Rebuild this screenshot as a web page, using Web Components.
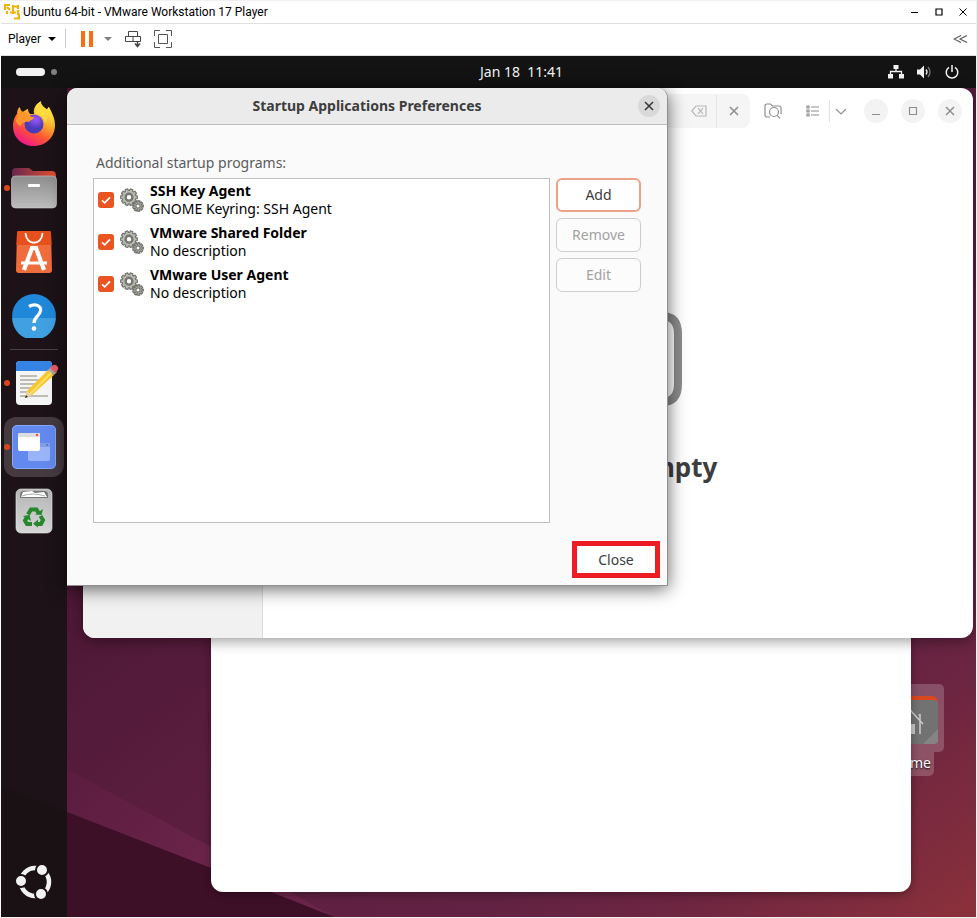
<!DOCTYPE html>
<html lang="en">
<head>
<meta charset="utf-8">
<title>Ubuntu 64-bit - VMware Workstation 17 Player</title>
<style>
html{height:100%}
body{margin:0;min-height:100%;display:flex;background:#f0f0f0;font-family:"Noto Sans",sans-serif;font-size:14px;color:#3d3d3d}
player-window{flex:1}
</style>
</head>
<body>
<player-window></player-window>
<script>
const BASE = `*{box-sizing:border-box}button{font:inherit;color:inherit;background:none;border:0;padding:0;margin:0;cursor:pointer}svg{display:block}`;
function define(name, css, html) {
  customElements.define(name, class extends HTMLElement {
    constructor() {
      super();
      const t = document.createElement('template');
      t.innerHTML = `<style>${BASE}${css}</style>${html}`;
      this.attachShadow({mode: 'open'}).append(t.content.cloneNode(true));
    }
  });
}

/* Gear pair used in the list rows */
const gear = (cx, cy, r, n) => {
  let d = '';
  const k = Math.PI * 2 / n;
  for (let i = 0; i < n; i++) {
    [[-.36, r - 1.6], [-.26, r], [.26, r], [.36, r - 1.6]].forEach(([o, q], j) => {
      const a = (i + o) * k;
      d += (i || j ? 'L' : 'M') + (cx + q * Math.cos(a)).toFixed(2) + ' ' + (cy + q * Math.sin(a)).toFixed(2);
    });
  }
  return d + 'Z';
};
const GEARS = `<svg width="24" height="24" viewBox="0 0 24 24" aria-hidden="true" stroke="#73746f" stroke-width="1.2" stroke-linejoin="round">
<path d="${gear(9, 9.2, 8.4, 10)}" fill="#babdb0"/><circle cx="9" cy="9.2" r="4" fill="#8d8f89"/><circle cx="9" cy="9.2" r="2.8" fill="#fff"/>
<path d="${gear(18, 18, 5.4, 9)}" fill="#babdb0"/><circle cx="18" cy="18" r="2.1" fill="#fff"/></svg>`;

define('startup-row', `
:host{display:block;height:42px}
label{display:flex;align-items:center;height:100%;padding-left:4px}
input{appearance:none;width:16px;height:16px;margin:0 6px 0 0;border-radius:3px;background:#e95420 url("data:image/svg+xml,%3Csvg xmlns='http://www.w3.org/2000/svg' viewBox='0 0 16 16'%3E%3Cpath d='M4 8.3l2.7 2.6L12 5.4' fill='none' stroke='white' stroke-width='1.7'/%3E%3C/svg%3E")}
input:not(:checked){background:#fff;border:1px solid #bbb}
.t{display:flex;flex-direction:column;margin-left:6px;line-height:18px;color:#000}
b{font-weight:700}
`, `<label><input type="checkbox" checked>${GEARS}<span class="t"><b><slot name="name"></slot></b><span><slot></slot></span></span></label>`);

customElements.define('push-button', class extends HTMLElement {
  constructor() {
    super();
    this.attachShadow({mode: 'open'}).innerHTML = `<style>${BASE}
:host{display:block}
button{width:100%;height:34px;padding-bottom:2px;border:1px solid #cdcdcd;border-radius:6px;background:#fcfcfc}
:host([focused]) button{border:2px solid #eda189;background:#fff}
button:disabled{color:#a2a2a2;cursor:default}
:host([marked]) button{height:37px;padding-bottom:1px;border:5px solid #ed1c24;border-radius:0;background:#fff}
</style><button type="button"><slot></slot></button>`;
  }
  connectedCallback() {
    this.shadowRoot.querySelector('button').disabled = this.hasAttribute('disabled');
  }
});

define('startup-dialog', `
:host{display:flex;flex-direction:column;background:#fafafa;border-right:1px solid #8f8f8f;border-bottom:1px solid #8f8f8f;border-radius:10px 10px 0 0;box-shadow:0 3px 18px rgba(0,0,0,.6)}
header{display:grid;grid-template-columns:36px 1fr 36px;align-items:center;height:37px;border-bottom:1px solid #bfbfbf;background:#ebebeb;border-radius:10px 10px 0 0}
h1{grid-column:2;margin:0;text-align:center;font-size:14px;line-height:20px;font-weight:700}
header button{width:22px;height:22px;border-radius:50%;background:#d9d9d9;display:grid;place-items:center;margin-left:7px}
main{flex:1;display:flex;flex-direction:column;padding:28px 7px 7px 26px}
p{margin:0 0 5px 3px;line-height:20px;color:#5a5a5a}
.row{display:flex;gap:6px;flex:1;margin-right:19px}
.list{flex:1;border:1px solid #bfbfbf;background:#fff;margin-bottom:18px}
.side{display:flex;flex-direction:column;gap:6px;width:85px}
.close{align-self:flex-end;width:88px}
`, `<header><h1>Startup Applications Preferences</h1><button type="button" aria-label="Close dialog"><svg width="10" height="10" viewBox="0 0 10 10" stroke="#333" stroke-width="1.5"><path d="M1 1l8 8M9 1L1 9"/></svg></button></header>
<main><p>Additional startup programs:</p>
<div class="row"><div class="list">
<startup-row><span slot="name">SSH Key Agent</span>GNOME Keyring: SSH Agent</startup-row>
<startup-row><span slot="name">VMware Shared Folder</span>No description</startup-row>
<startup-row><span slot="name">VMware User Agent</span>No description</startup-row>
</div><div class="side"><push-button focused>Add</push-button><push-button disabled>Remove</push-button><push-button disabled>Edit</push-button></div></div>
<push-button marked class="close">Close</push-button></main>`);

define('files-window', `
:host{display:flex;border-radius:12px;background:#fff;overflow:hidden;box-shadow:0 3px 14px rgba(0,0,0,.4)}
aside{width:180px;background:#f1f1f1;border-right:1px solid #dcdcdc}
section{flex:1;display:flex;flex-direction:column}
header{display:flex;align-items:center;justify-content:flex-end;height:46px;padding-right:11px;color:#8f8f8f}
header svg{fill:none;stroke:currentColor;stroke-width:1.2}
.search{display:flex;align-items:center;flex:1;justify-content:flex-end;height:34px;margin:0 13px 0 12px;background:#f5f5f5;border-radius:8px}
.search input{flex:1;min-width:0;border:0;background:none;height:30px}
.search button{width:34px;height:34px;display:grid;place-items:center}
.search button:last-child{border-left:1px solid #e6e6e6}
.search button:first-of-type{color:#b8b8b8}
.ic{width:20px;height:34px;display:grid;place-items:center}
.sep{width:1px;height:22px;background:#e0e0e0;margin:0 1px 0 6px}
.w{width:24px;height:24px;border-radius:50%;background:#f3f3f3;display:grid;place-items:center;margin-left:13px}
.empty{flex:1;display:flex;flex-direction:column;align-items:center;padding-top:160px}
h2{margin:41px 0 0;font-size:26px;line-height:40px;font-weight:700}
`, `<aside></aside><section><header>
<div class="search"><input type="text" aria-label="Search files"><button type="button" aria-label="Clear"><svg width="16" height="12" viewBox="0 0 16 12"><path d="M5 1h10v10H5L.8 6zM7 3.2l5 5.6M12 3.2l-5 5.6"/></svg></button><button type="button" aria-label="Close search"><svg width="10" height="10" viewBox="0 0 10 10" style="stroke-width:1.6"><path d="M1 1l8 8M9 1L1 9"/></svg></button></div>
<button class="ic" type="button" aria-label="Search everywhere"><svg width="18" height="16" viewBox="0 0 18 16"><path d="M6 14H3Q1 14 1 12V3Q1 1 3 1h3.500l2 2H15q2 0 2 2v6"/><circle cx="10" cy="9" r="4.500"/><path d="M13 12.300l3 3"/></svg></button>
<button class="ic" type="button" aria-label="List view" style="margin-left:20px"><svg width="14" height="12" viewBox="0 0 14 12"><path d="M5 2h8M5 6h8M5 10h8M1 1h2v2H1zM1 5h2v2H1zM1 9h2v2H1z"/></svg></button>
<span class="sep"></span><button class="ic" type="button" aria-label="View options"><svg width="12" height="7" viewBox="0 0 12 7"><path d="M1 1l5 5 5-5"/></svg></button>
<button class="w" type="button" aria-label="Minimize"><svg width="10" height="10" viewBox="0 0 10 10"><path d="M1 8.500h8"/></svg></button>
<button class="w" type="button" aria-label="Maximize"><svg width="10" height="10" viewBox="0 0 10 10"><path d="M1.500 1.500h7v7h-7z"/></svg></button>
<button class="w" type="button" aria-label="Close"><svg width="10" height="10" viewBox="0 0 10 10" style="stroke-width:1.500"><path d="M1 1l8 8M9 1L1 9"/></svg></button>
</header>
<div class="empty"><svg width="128" height="112" viewBox="0 0 128 112" fill="none" stroke="#8b8b8b" stroke-width="8"><path d="M4 90V22Q4 4 22 4h22l16 18h48q16 0 16 18v50q0 18-16 18H20Q4 108 4 90z"/></svg><h2>Folder is Empty</h2></div></section>`);

define('home-shortcut', `
:host{display:flex;flex-direction:column;align-items:center;color:#fff;font-size:14px}
.pic{width:66px;height:68px;padding-top:9px;background:rgba(255,255,255,.2);border-radius:5px;display:flex;justify-content:center}
.txt{padding:0 3px;height:24px;line-height:22px;background:rgba(255,255,255,.2);border-radius:0 0 5px 5px;text-shadow:0 1px 2px #000}
`, `<div class="pic"><svg width="54" height="52" viewBox="0 0 54 52"><path d="M0 7q0-4 4-4h43q7 0 7 6v9H0z" fill="#d9481f"/><rect y="7" width="54" height="44" rx="4" fill="#727272"/><path d="M54 36v11q0 4-4 4H39z" fill="#848484"/><path d="M13 32l14-14 12 13M36 22h-1.500M36 21v20M17 30v11" fill="none" stroke="#c8c8c8" stroke-width="1.600"/><path d="M24 31h7v10h-7z" fill="#c8c8c8"/></svg></div><div class="txt">Home</div>`);

const ICONS = {
firefox: `<svg width="44" height="46" viewBox="0 0 44 46"><defs><linearGradient id="a" x1=".8" y1=".1" x2=".3" y2="1"><stop offset="0" stop-color="#fff44f"/><stop offset=".35" stop-color="#ffb02e"/><stop offset=".65" stop-color="#ff5634"/><stop offset="1" stop-color="#f0148c"/></linearGradient><radialGradient id="b" cx=".6" cy=".25"><stop offset="0" stop-color="#a259ff"/><stop offset="1" stop-color="#4a3bb8"/></radialGradient></defs><path d="M1 25C1 18 4 14 5 13c0-3 1-6 3-7 0 2 1 4 3 5 1-1 4-3 5-3 0 2 1 4 2 5h4c-1-6 2-10 7-13-1 4 3 6 6 9 0-1 1-3 2-3 3 6 6 11 6 18 0 12-9 21-21 21S1 37 1 25z" fill="url(#a)"/><circle cx="22" cy="23" r="9.500" fill="url(#b)"/><path d="M4 20c1-5 4-9 6-9 3-1 6 2 8 4 1 1 3 1 4 1 0 3-4 3-5 5-4-1-8 1-8 4-3-1-5-3-5-5z" fill="#ff962d"/><path d="M29 1c-4 3-6 7-5 12 6 1 10 5 9 10 3-4 3-9 1-13 4 5 6 10 5 16 3-7 1-12-2-16-3-3-8-5-8-9z" fill="#ffdb3f"/></svg>`,
files: `<svg width="46" height="42" viewBox="0 0 46 42"><defs><linearGradient id="a"><stop offset="0" stop-color="#6a2550"/><stop offset="1" stop-color="#e0502b"/></linearGradient><linearGradient id="b" x2="0" y2="1"><stop offset="0" stop-color="#8d8d8d"/><stop offset="1" stop-color="#bdbdbd"/></linearGradient></defs><path d="M1 16V5q0-4 4-4h13l4 3h19q4 0 4 5v8z" fill="url(#a)"/><rect x=".5" y="9" width="45" height="32" rx="4" fill="url(#b)" stroke="#ccc" stroke-width=".6"/><rect x="17" y="17" width="12" height="3" rx="1" fill="#fff"/></svg>`,
center: `<svg width="36" height="44" viewBox="0 0 36 44"><path d="M3 1h30q2 0 2 2l1 37q0 3-3 3H3q-3 0-3-3L1 3q0-2 2-2z" fill="#ef6d3d"/><path d="M3 1h30q2 0 2 2l.5 12H.5L1 3q0-2 2-2z" fill="#e7501c"/><path d="M9.500 3c.5 13 16.500 13 17 0" fill="none" stroke="#fff" stroke-width="1.800"/><g fill="none" stroke="#fff"><path d="M8 40l8-22h4l8 22" stroke-width="4.200"/><path d="M5 33h26" stroke-width="3"/></g></svg>`,
help: `<svg width="44" height="44" viewBox="0 0 44 44"><circle cx="22" cy="22" r="21.900" fill="#2088d8"/><path d="M.2 24h43.600a21.800 21.800 0 01-43.600 0z" fill="#3fa0e2"/><path d="M17 12.500c6-3.500 12.500-1 11.500 4.500-1 5-6.500 6-6.500 12" fill="none" stroke="#fff" stroke-width="3.200"/><circle cx="22" cy="34.500" r="2.300" fill="#fff"/></svg>`,
editor: `<svg width="38" height="46" viewBox="0 0 38 46" overflow="visible"><rect x="1" y="1" width="36" height="44" rx="4" fill="#f5f5f5"/><path d="M1 11V5q0-4 4-4h28q4 0 4 4v6z" fill="#3584e4"/><path d="M5 16h17M5 20h19M5 24h16M5 28h13M5 32h11M5 36h28" stroke="#bfbcb4" stroke-width="1.800"/><path d="M10 38l2-7L33 10l6 5-22 20z" fill="#f8c62a"/><path d="M15 34l21-21" stroke="#fbe06d" stroke-width="2"/><path d="M10 38l2-7 5 4z" fill="#eed2a4"/><path d="M10 38l1-3 2 2z" fill="#222"/><path d="M33 10l3-3 6 5-3 3z" fill="#aaa"/><path d="M35 8l2-2q3-3 6 1 1 2-1 4l-2 2z" fill="#ed5b65"/></svg>`,
startup: `<svg width="44" height="44" viewBox="0 0 44 44"><rect width="44" height="44" rx="5" fill="#6389ef"/><rect x=".500" y=".500" width="43" height="43" rx="4.500" fill="none" stroke="#86a6fa"/><rect x="16" y="18" width="22" height="18" rx="2" fill="#9ab4f8"/><path d="M16 22v-2q0-2 2-2h18q2 0 2 2v2z" fill="#829fe4"/><circle cx="35" cy="20" r="1" fill="#5571b5"/><rect x="6" y="8" width="22" height="18" rx="2" fill="#fff"/><path d="M6 12v-2q0-2 2-2h18q2 0 2 2v2z" fill="#dedede"/><circle cx="25" cy="10" r="1.200" fill="#e95420"/></svg>`,
trash: `<svg width="38" height="46" viewBox="0 0 38 46"><defs><linearGradient id="b" x2="0" y2="1"><stop offset="0" stop-color="#b5b5b5"/><stop offset="1" stop-color="#d6d6d6"/></linearGradient></defs><rect x="1" y="1" width="36" height="44" rx="5" fill="url(#b)" stroke="#eee" stroke-width=".6"/><path d="M5 10V7q0-4 4-4h20q4 0 4 4v3z" fill="#777"/><path d="M6 9l2-5 9-1 3 2 9-1 3 5z" fill="#fff"/><path d="M7 8q10-4 23 0" fill="none" stroke="#aaa"/><g fill="none" stroke="#26882b" stroke-width="4"><path d="M13 26.500l3-5h5.500l2 3.500"/><path d="M25.500 28l2.500 4-2 4H22"/><path d="M17 36h-5l-2-3.500 2-3.500"/></g><path d="M20 26.500l6.500.5 1.500-6zM23 31.500v8l-5-3.800zM8 28l6.500-1 1.500 6z" fill="#26882b"/></svg>`,
ubuntu: `<svg width="38" height="38" viewBox="0 0 38 38"><circle cx="20" cy="19" r="14" fill="none" stroke="#f2f2f2" stroke-width="4.500"/><g fill="#f2f2f2" stroke="#1b1116" stroke-width="2"><circle cx="6" cy="18" r="6"/><circle cx="27" cy="7" r="6"/><circle cx="26" cy="31" r="6"/></g></svg>`
};
customElements.define('dock-item', class extends HTMLElement {
  constructor() {
    super();
    this.attachShadow({mode: 'open'}).innerHTML = `<style>${BASE}
:host{display:block;position:relative;height:64px}
button{width:60px;height:60px;margin:2px 3px;border-radius:12px;display:grid;place-items:center}
:host([active]) button{background:#463a41}
:host([running])::before{content:"";position:absolute;left:3px;top:29px;width:6px;height:6px;border-radius:50%;background:#d9481c}
</style><button type="button" aria-label="${this.getAttribute('label')}">${ICONS[this.getAttribute('icon')]}</button>`;
  }
});

define('app-dock', `
:host{display:flex;flex-direction:column;width:66px;padding-top:4px;background:rgba(23,18,20,.91)}
hr{width:48px;height:1px;border:0;background:#494146;margin:1px auto}
dock-item:last-child{margin-top:auto;margin-bottom:3px}
`, `<dock-item label="Firefox" icon="firefox"></dock-item><dock-item running label="Files" icon="files"></dock-item><dock-item label="App Center" icon="center"></dock-item><dock-item label="Help" icon="help"></dock-item><hr><dock-item running label="Text Editor" icon="editor"></dock-item><dock-item running active label="Startup Applications" icon="startup"></dock-item><dock-item label="Trash" icon="trash"></dock-item><dock-item label="Show Apps" icon="ubuntu"></dock-item>`);

define('gnome-bar', `
:host{display:grid;grid-template-columns:66px 1fr;align-items:center;height:32px;background:#131313;color:#f2f2f2;padding-bottom:1px}
button{grid-row:1}
.ws{display:flex;align-items:center;gap:6px;margin-left:15px}
.ws i{width:29px;height:8px;border-radius:4px;background:#f2f2f2}
.ws i+i{width:6px;height:6px;background:#808080}
.clock{grid-column:2;justify-self:center;white-space:pre;line-height:20px}
.sys{grid-column:2;display:flex;gap:13px;justify-self:end;align-items:center;margin-right:17px}
`, `<button class="ws" type="button" aria-label="Activities"><i></i><i></i></button><button class="clock" type="button">Jan 18  11:41</button>
<button class="sys" type="button" aria-label="System menu">
<svg width="16" height="14" viewBox="0 0 16 14" fill="#f2f2f2"><path d="M5.500 0h5v4h-5zM0 9h5v4.500H0zM11 9h5v4.500h-5z"/><path d="M8 4v2.500M2.500 9.500v-3h11v3" fill="none" stroke="#f2f2f2" stroke-width="1.300"/></svg>
<svg width="15" height="14" viewBox="0 0 15 14"><path d="M0 4.500h3L7 .5v13l-4-4H0z" fill="#f2f2f2"/><path d="M9 4.500q2 2.500 0 5" fill="none" stroke="#f2f2f2" stroke-width="1.300"/><path d="M11 2q4 5 0 10" fill="none" stroke="#777" stroke-width="1.300"/></svg>
<svg width="14" height="14" viewBox="0 0 14 14" fill="none" stroke="#f2f2f2" stroke-width="1.500"><path d="M4 2.300a5.800 5.800 0 106 0M7 0v7"/></svg></button>`);

define('guest-desktop', `
:host{display:grid;grid-template:auto 1fr/auto 1fr;position:relative;overflow:hidden;background:#4e1836}
.wall{position:absolute;inset:0;width:100%;height:100%}
gnome-bar{grid-column:1/-1;position:relative}
app-dock{position:relative}
.desk{position:relative;min-height:800px}
.desk>*{position:absolute}
.back{left:144px;top:160px;width:700px;height:644px;background:#fff;border-radius:12px;box-shadow:0 2px 10px rgba(0,0,0,.35)}
home-shortcut{left:811px;top:596px}
files-window{left:16px;top:0;width:890px;height:550px}
startup-dialog{left:0;top:0;width:601px;height:498px}
`, `<svg class="wall" viewBox="0 0 975 861" preserveAspectRatio="none" aria-hidden="true"><defs>
<linearGradient id="w" gradientUnits="userSpaceOnUse" x1="0" y1="0" x2="759" y2="1012"><stop offset=".38" stop-color="#4e1836"/><stop offset=".54" stop-color="#5a1d3e"/><stop offset=".77" stop-color="#622243"/><stop offset=".85" stop-color="#6c2541"/><stop offset="1" stop-color="#8a303b"/></linearGradient>
<linearGradient id="r" gradientUnits="userSpaceOnUse" x1="66" y1="700" x2="210" y2="800"><stop offset="0" stop-color="#5a1c3f"/><stop offset="1" stop-color="#6b244a"/></linearGradient></defs>
<rect width="975" height="861" fill="url(#w)"/><path d="M0 677L66 713 210 791 333 861 66 756 0 730z" fill="url(#r)"/><path d="M0 730L66 756 210 812 333 861H0z" fill="#3e1028"/></svg>
<gnome-bar></gnome-bar><app-dock></app-dock><div class="desk"><home-shortcut></home-shortcut><div class="back"></div><files-window></files-window><startup-dialog></startup-dialog></div>`);

define('player-window', `
:host{display:flex;flex-direction:column;margin:1px 1px 1px 0;padding-left:1px;background:#fff;font-family:Roboto,"Noto Sans",sans-serif;color:#000}
.title{display:flex;align-items:center;height:23px;padding:0 1px 0 3px;border-bottom:1px solid #e0e0e0;font-size:12px}
.title span{flex:1;line-height:22px;margin-left:3px}
.title button{width:24px;height:20px;display:grid;place-items:center}
.tools{display:flex;align-items:center;height:32px;padding:0 8px 2px 7px;border-bottom:1px solid #e0e0e0;font-size:12px}
.player{display:flex;align-items:center;gap:7px}
.sep{width:1px;height:19px;background:#ccc;margin:0 15px 0 9px}
.end{margin-left:auto}
guest-desktop{flex:1;font-family:"Noto Sans",sans-serif;color:#3d3d3d}
.tri{width:0;height:0;border:4px solid transparent;border-bottom:0;border-top-color:currentColor}
`, `<div class="title"><svg width="16" height="16" viewBox="0 0 16 16" fill="none" stroke="#eeb211" stroke-width="2.200"><path d="M1 6V1h5M3 3l3 3M9 2.500h4M14 1v4M9 1v9M6 8.500h6M14 6v5M3 7v3M10 14.500h5v-5"/></svg><span>Ubuntu 64-bit - VMware Workstation 17 Player</span>
<button type="button" aria-label="Minimize"><svg width="8" height="8" viewBox="0 0 8 8"><path d="M0 4.500h7" stroke="#000"/></svg></button><button type="button" aria-label="Maximize"><svg width="8" height="8" viewBox="0 0 8 8"><path d="M1 1h6v6H1z" fill="none" stroke="#000" stroke-width="1.200"/></svg></button><button type="button" aria-label="Close"><svg width="8" height="8" viewBox="0 0 8 8"><path d="M.5 .5l7 7M7.500 .5l-7 7" stroke="#000"/></svg></button></div>
<div class="tools"><button class="player" type="button">Player <i class="tri"></i></button><span class="sep"></span>
<button type="button" aria-label="Pause"><svg width="13" height="16"><path d="M0 0h4v16H0zM8 0h4v16H8z" fill="#ff6a13"/></svg></button>
<button type="button" aria-label="Power options" style="margin:0 13px 0 10px"><i class="tri" style="display:block;color:#808080"></i></button>
<button type="button" aria-label="Send Ctrl+Alt+Del"><svg width="17" height="18" viewBox="0 0 17 18" fill="none" stroke="#444"><path d="M3.500 6V1.500h9V6M.5 6.500h15v5H.5zM8 6.500v5"/><path d="M12.500 11v5M10 13.500l2.500 3 2.500-3" stroke-width="1.500"/></svg></button>
<button type="button" aria-label="Full screen" style="margin-left:12px"><svg width="18" height="18" viewBox="0 0 18 18" fill="none" stroke="#555"><path d="M.5 6V.5H6M12 .5h5.500V6M17.500 12v5.500H12M6 17.500H.5V12M4.500 4.500h9v9h-9z"/></svg></button>
<button class="end" type="button" aria-label="Hide toolbar"><svg width="15" height="8" viewBox="0 0 15 8" fill="none" stroke="#555" stroke-width="1.100"><path d="M8 .5L1 4l7 3.500M14 .5L7 4l7 3.500"/></svg></button></div>
<guest-desktop></guest-desktop>`);
</script>
</body>
</html>
